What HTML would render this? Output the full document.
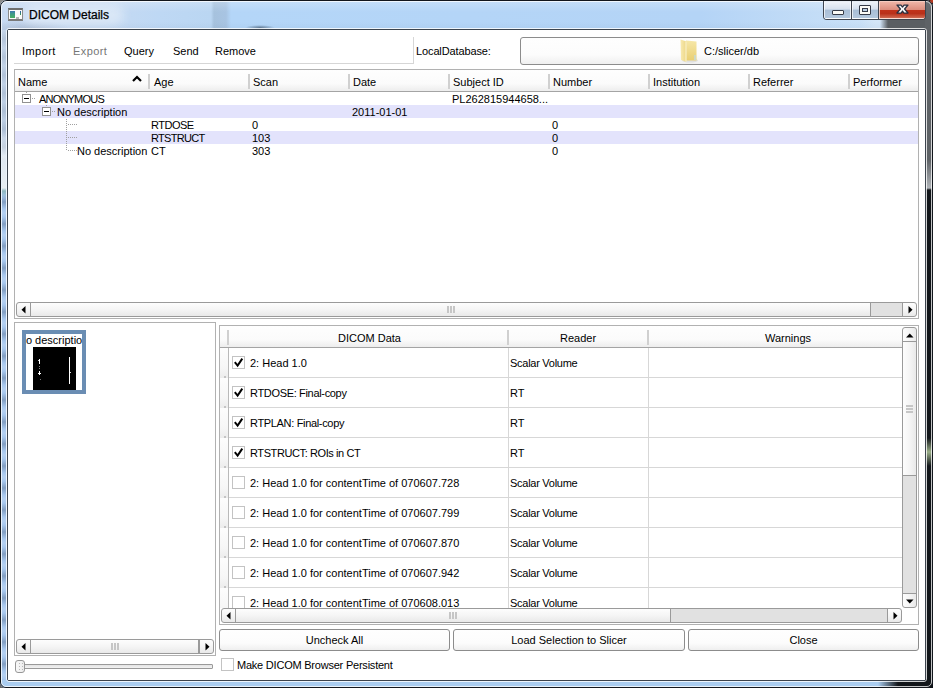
<!DOCTYPE html>
<html><head><meta charset="utf-8">
<style>
*{box-sizing:border-box}
html,body{margin:0;padding:0}
body{width:933px;height:688px;overflow:hidden;position:relative;background:#0d1116;font-family:"Liberation Sans",sans-serif;font-size:11px;color:#000}
.a{position:absolute}
.t{position:absolute;white-space:nowrap;line-height:13px;font-size:11px}
.sb{position:absolute;border:1px solid #979797;border-radius:3px;background:linear-gradient(180deg,#fdfdfd,#f4f4f4 50%,#e9e9e9)}
.sbv{position:absolute;border:1px solid #979797;border-radius:3px;background:linear-gradient(90deg,#fdfdfd,#f4f4f4 50%,#e9e9e9)}
.btn{position:absolute;border:1px solid #8c8c8c;border-radius:3px;background:linear-gradient(180deg,#fefefe 0,#fcfcfc 65%,#efefef 100%);text-align:center;line-height:13px;padding-top:4px}
.cb{position:absolute;width:13px;height:13px;border:1px solid #c3c3c3;background:#fff}
</style></head><body>

<div class="a" style="left:0px;top:0px;width:6px;height:6px;background:#8c8c8c"></div>
<div class="a" style="left:0px;top:682px;width:6px;height:6px;background:#6a6a6a"></div>
<div class="a" style="left:0;top:0;width:933px;height:688px;border-radius:7px 7px 6px 6px;overflow:hidden;background:linear-gradient(90deg,#a9cbee 0,#a9cbee 880px,#101418 896px,#101418 100%)">
<div class="a" style="left:0px;top:0px;width:933px;height:30px;background:linear-gradient(90deg,#c8daf2 0,#c6daf2 100px,#bed8f4 160px,#bad6f2 211px,#a6c2de 214px,#a8c4e2 226px,#b4d6f8 231px,#b4d4f6 700px,#c9e0f7 860px,#d4e6f8 875px)"></div>
<div class="a" style="left:245px;top:25px;width:30px;height:5px;border-radius:50%;background:radial-gradient(ellipse at center,rgba(40,60,80,.55) 0,rgba(40,60,80,0) 70%)"></div>
<div class="a" style="left:0px;top:20px;width:70px;height:10px;background:radial-gradient(ellipse at 40% 80%,rgba(120,130,150,.25) 0,rgba(120,130,150,0) 70%)"></div>
<div class="a" style="left:0px;top:0px;width:933px;height:30px;background:linear-gradient(180deg,rgba(255,255,255,.25) 0,rgba(255,255,255,0) 12px,rgba(0,0,0,0) 22px,rgba(60,90,130,.06) 30px)"></div>
<div class="a" style="left:24px;top:5px;width:100px;height:20px;border-radius:10px;background:rgba(240,246,252,.5);filter:blur(5px)"></div>
<div class="a" style="left:2px;top:30px;width:4px;height:650px;background:linear-gradient(180deg,#c6d6ea 0,#bccde2 100px,#dfe8f1 130px,#e8eef2 158px,#8fb8c0 161px,#a8c8ee 168px,#a8c8ee 100%)"></div>
<div class="a" style="left:2px;top:195px;width:4px;height:485px;background:repeating-linear-gradient(180deg,rgba(60,80,110,0) 0,rgba(60,80,110,.35) 7px,rgba(60,80,110,0) 14px,rgba(255,255,255,0.15) 18px,rgba(60,80,110,0) 22px)"></div>
<div class="a" style="left:2px;top:30px;width:4px;height:130px;background:repeating-linear-gradient(180deg,rgba(60,80,110,0) 0,rgba(60,80,110,.12) 9px,rgba(60,80,110,0) 18px),linear-gradient(180deg,rgba(255,255,255,0) 100px,rgba(255,255,255,.3) 130px)"></div>
<div class="a" style="left:880px;top:19px;width:53px;height:11px;background:linear-gradient(90deg,rgba(90,94,98,0) 0,#5a5e62 8px)"></div>
<div class="a" style="left:925px;top:0px;width:8px;height:688px;background:linear-gradient(180deg,#6a6e72 0,#5e6266 20px,#5e6266 160px,#b0b4b8 188px,#12161a 190px,#12161a 438px,#9aae88 452px,#12161a 466px)"></div>
<div class="a" style="left:0px;top:680px;width:933px;height:8px;background:linear-gradient(90deg,#aacdf0 0,#aacdf0 878px,#12161a 898px)"></div>
</div>
<div class="a" style="left:0px;top:0px;width:933px;height:688px;border:1px solid #12161c;border-radius:7px 7px 6px 6px"></div>
<div class="a" style="left:1px;top:1px;width:931px;height:686px;border:1px solid rgba(255,255,255,0.75);border-radius:6px 6px 5px 5px"></div>
<div class="a" style="left:6px;top:28px;width:921px;height:654px;border:1px solid rgba(255,255,255,0.8);border-radius:3px"></div>
<div class="a" style="left:7px;top:29px;width:919px;height:652px;border:1px solid #3c444e;border-radius:2px"></div>
<div class="a" style="left:8px;top:30px;width:917px;height:650px;background:#fff"></div>
<div class="a" style="left:8px;top:8px;width:15px;height:13px;background:#fbfbfb;border:1px solid #8c8c8c;border-top:2px solid #6e6e6e;border-bottom:2px solid #7a7a7a"><div class="a" style="left:1px;top:1px;width:5px;height:7px;background:linear-gradient(180deg,#3f78b0,#3f9a88 40%,#48b060)"></div><div class="a" style="left:11px;top:1px;width:1px;height:4px;background:linear-gradient(180deg,#2a5ab0,#40a050)"></div><div class="a" style="left:7px;top:7px;width:3px;height:2px;background:#b4b4b4"></div></div>
<div class="t" style="left:29px;top:8px;font-size:12px;line-height:14px;-webkit-text-stroke:0.25px #000">DICOM Details</div>
<div class="a" style="left:929px;top:0px;width:4px;height:3px;background:radial-gradient(circle at 100% 0,#c03a20 0,#c03a20 2px,rgba(192,58,32,0) 4px)"></div>
<div class="a" style="left:823px;top:1px;width:103px;height:19px;border:1px solid #3f4550;border-top:none;border-radius:0 0 4px 4px;overflow:hidden"><div class="a" style="left:0px;top:0px;width:27px;height:18px;border:1px solid rgba(255,255,255,.7);background:linear-gradient(180deg,#eef3f9 0,#d6e1ee 45%,#a9bed6 50%,#b4c8de 100%)"></div><div class="a" style="left:27px;top:0px;width:1px;height:18px;background:#3f4550"></div><div class="a" style="left:28px;top:0px;width:27px;height:18px;border:1px solid rgba(255,255,255,.7);background:linear-gradient(180deg,#eef3f9 0,#d6e1ee 45%,#a9bed6 50%,#b4c8de 100%)"></div><div class="a" style="left:54px;top:0px;width:1px;height:18px;background:#3f4550"></div><div class="a" style="left:55px;top:0px;width:47px;height:18px;border:1px solid rgba(255,230,220,.8);background:linear-gradient(180deg,#eeb4a6 0,#dc8e7e 47%,#c1321a 50%,#b9301a 72%,#cd6850 100%)"></div></div><div class="a" style="left:832px;top:10px;width:12px;height:5px;border:1px solid #363b48;border-radius:1px;background:#fbfaf6"></div><div class="a" style="left:859px;top:5px;width:12px;height:10px;border:1px solid #363b48;border-radius:1px;background:#fbfaf6"></div><div class="a" style="left:862px;top:8px;width:6px;height:4px;border:1px solid #363b48;background:#b9cde3"></div><svg class="a" style="left:896px;top:4px" width="13" height="10"><polygon points="1,1 5,1 6.5,3 8,1 12,1 8.6,5 12,9 8,9 6.5,7 5,9 1,9 4.4,5" fill="#f8f8f8" stroke="#2a3040" stroke-width="1.25" stroke-linejoin="round"/></svg>
<div class="t" style="left:22px;top:45px;letter-spacing:0.45px">Import</div>
<div class="t" style="left:73px;top:45px;color:#767676;letter-spacing:0.4px">Export</div>
<div class="t" style="left:124px;top:45px;">Query</div>
<div class="t" style="left:173px;top:45px;">Send</div>
<div class="t" style="left:215px;top:45px;">Remove</div>
<div class="a" style="left:14px;top:63px;width:400px;height:1px;background:#d6d6d6"></div>
<div class="a" style="left:413px;top:37px;width:1px;height:27px;background:#d6d6d6"></div>
<div class="t" style="left:416px;top:45px;letter-spacing:-0.12px">LocalDatabase:</div>
<div class="btn" style="left:520px;top:37px;width:399px;height:28px"></div>
<svg class="a" style="left:678px;top:38px" width="22" height="26">
<defs><linearGradient id="fg1" x1="0" y1="0" x2="0" y2="1"><stop offset="0" stop-color="#f6e7a8"/><stop offset="1" stop-color="#e9cf72"/></linearGradient>
<linearGradient id="fg2" x1="0" y1="0" x2="1" y2="0"><stop offset="0" stop-color="#f8eab0"/><stop offset="1" stop-color="#ecd685"/></linearGradient></defs>
<ellipse cx="12" cy="22.5" rx="8" ry="2" fill="#000" opacity=".08"/>
<path d="M8 2.5 L18.5 3.5 L18.5 22.5 L8 22.5 Z" fill="url(#fg1)"/>
<path d="M2.5 1.5 L8.5 3.5 L8.5 24 L3 22 Z" fill="url(#fg2)"/>
<path d="M7.5 3.5 L8.5 3.5 L8.5 24 L7.5 23.5 Z" fill="#fffbe6" opacity=".8"/>
<rect x="16" y="17" width="2" height="5" fill="#cfd9c0"/>
</svg>
<div class="t" style="left:704px;top:45px;">C:/slicer/db</div>
<div class="a" style="left:14px;top:69px;width:905px;height:250px;border:1px solid #b1b1b1;background:#fff"></div>
<div class="a" style="left:15px;top:70px;width:903px;height:21px;background:linear-gradient(180deg,#fefefe,#fbfbfb 65%,#ededed)"></div>
<div class="a" style="left:15px;top:91px;width:903px;height:1px;background:#a4a4a4"></div>
<div class="a" style="left:148px;top:74px;width:2px;height:15px;background:#d0d0d0"></div>
<div class="a" style="left:248px;top:74px;width:2px;height:15px;background:#d0d0d0"></div>
<div class="a" style="left:348px;top:74px;width:2px;height:15px;background:#d0d0d0"></div>
<div class="a" style="left:448px;top:74px;width:2px;height:15px;background:#d0d0d0"></div>
<div class="a" style="left:548px;top:74px;width:2px;height:15px;background:#d0d0d0"></div>
<div class="a" style="left:648px;top:74px;width:2px;height:15px;background:#d0d0d0"></div>
<div class="a" style="left:748px;top:74px;width:2px;height:15px;background:#d0d0d0"></div>
<div class="a" style="left:848px;top:74px;width:2px;height:15px;background:#d0d0d0"></div>
<div class="t" style="left:18px;top:76px;">Name</div>
<div class="t" style="left:154px;top:76px;">Age</div>
<div class="t" style="left:253px;top:76px;">Scan</div>
<div class="t" style="left:353px;top:76px;">Date</div>
<div class="t" style="left:453px;top:76px;">Subject ID</div>
<div class="t" style="left:553px;top:76px;">Number</div>
<div class="t" style="left:653px;top:76px;">Institution</div>
<div class="t" style="left:753px;top:76px;">Referrer</div>
<div class="t" style="left:853px;top:76px;">Performer</div>
<svg class="a" style="left:131px;top:74px" width="12" height="9"><polyline points="2,7 6,3 10,7" fill="none" stroke="#000" stroke-width="2.2"/></svg>
<div class="a" style="left:15px;top:105px;width:903px;height:13px;background:#e3e3fc"></div>
<div class="a" style="left:15px;top:131px;width:903px;height:13px;background:#e3e3fc"></div>
<div class="a" style="left:22px;top:94px;width:9px;height:9px;border:1px solid #919191;background:#fff"></div>
<div class="a" style="left:24px;top:98px;width:5px;height:1px;background:#000"></div>
<div class="a" style="left:42px;top:107px;width:9px;height:9px;border:1px solid #919191;background:#fff"></div>
<div class="a" style="left:44px;top:111px;width:5px;height:1px;background:#000"></div>
<div class="a" style="left:32px;top:98px;width:4px;height:1px;background:repeating-linear-gradient(90deg,#a0a0a0 0 1px,transparent 1px 2px)"></div><div class="a" style="left:52px;top:111px;width:4px;height:1px;background:repeating-linear-gradient(90deg,#a0a0a0 0 1px,transparent 1px 2px)"></div><div class="a" style="left:26px;top:92px;width:1px;height:1px;background:#a0a0a0"></div><div class="a" style="left:46px;top:105px;width:1px;height:1px;background:#a0a0a0"></div><div class="a" style="left:66px;top:119px;width:1px;height:32px;background:repeating-linear-gradient(180deg,#a0a0a0 0 1px,transparent 1px 2px)"></div><div class="a" style="left:68px;top:124px;width:9px;height:1px;background:repeating-linear-gradient(90deg,#a0a0a0 0 1px,transparent 1px 2px)"></div><div class="a" style="left:68px;top:137px;width:9px;height:1px;background:repeating-linear-gradient(90deg,#a0a0a0 0 1px,transparent 1px 2px)"></div><div class="a" style="left:68px;top:150px;width:9px;height:1px;background:repeating-linear-gradient(90deg,#a0a0a0 0 1px,transparent 1px 2px)"></div>
<div class="t" style="left:39px;top:93px;letter-spacing:-0.8px">ANONYMOUS</div>
<div class="t" style="left:57px;top:106px;">No description</div>
<div class="t" style="left:77px;top:145px;">No description</div>
<div class="t" style="left:352px;top:106px;">2011-01-01</div>
<div class="t" style="left:452px;top:93px;">PL262815944658...</div>
<div class="t" style="left:151px;top:119px;letter-spacing:-0.5px">RTDOSE</div>
<div class="t" style="left:252px;top:119px;">0</div>
<div class="t" style="left:552px;top:119px;">0</div>
<div class="t" style="left:151px;top:132px;letter-spacing:-0.7px">RTSTRUCT</div>
<div class="t" style="left:252px;top:132px;">103</div>
<div class="t" style="left:552px;top:132px;">0</div>
<div class="t" style="left:151px;top:145px;">CT</div>
<div class="t" style="left:252px;top:145px;">303</div>
<div class="t" style="left:552px;top:145px;">0</div>
<div class="a" style="left:16px;top:302px;width:901px;height:15px;border:1px solid #9a9a9a;border-radius:3px;background:linear-gradient(180deg,#fdfdfd 0,#f5f5f5 50%,#e9e9e9 100%)"></div><div class="a" style="left:871px;top:303px;width:31px;height:13px;background:#e1e1e1"></div><div class="a" style="left:30px;top:302px;width:1px;height:15px;background:#9a9a9a"></div><div class="a" style="left:870px;top:302px;width:1px;height:15px;background:#9a9a9a"></div><svg class="a" style="left:21px;top:306px" width="5" height="8"><path d="M4.5 0 L4.5 7.5 L0.5 3.75 Z" fill="#000"/></svg><svg class="a" style="left:908px;top:306px" width="5" height="8"><path d="M0.5 0 L0.5 7.5 L4.5 3.75 Z" fill="#000"/></svg><div class="a" style="left:447px;top:306px;width:2px;height:7px;background:#c6c6c6"></div><div class="a" style="left:450px;top:306px;width:2px;height:7px;background:#c6c6c6"></div><div class="a" style="left:453px;top:306px;width:2px;height:7px;background:#c6c6c6"></div><div class="a" style="left:902px;top:302px;width:1px;height:15px;background:#9a9a9a"></div>
<div class="a" style="left:14px;top:322px;width:202px;height:334px;border:1px solid #b1b1b1;background:#fff"></div>
<div class="a" style="left:22px;top:330px;width:64px;height:64px;border:4px solid #6a8db3;background:#fff;overflow:hidden"></div><div class="a" style="left:26px;top:334px;width:56px;height:13px;overflow:hidden"><div class="t" style="left:-8px;top:0px">No description</div></div><div class="a" style="left:33px;top:347px;width:43px;height:43px;background:#000"></div><div class="a" style="left:69px;top:357px;width:1px;height:27px;background:#fff"></div><div class="a" style="left:70px;top:372px;width:1px;height:1px;background:#ddd"></div><div class="a" style="left:39px;top:359px;width:1px;height:5px;background:#fff"></div><div class="a" style="left:38px;top:360px;width:1px;height:1px;background:#ccc"></div><div class="a" style="left:39px;top:366px;width:1px;height:1px;background:#888"></div><div class="a" style="left:39px;top:368px;width:1px;height:1px;background:#888"></div><div class="a" style="left:38px;top:373px;width:3px;height:1px;background:#fff"></div><div class="a" style="left:39px;top:371px;width:1px;height:4px;background:#fff"></div><div class="a" style="left:40px;top:379px;width:1px;height:1px;background:#777"></div>
<div class="a" style="left:16px;top:639px;width:198px;height:15px;border:1px solid #9a9a9a;border-radius:3px;background:linear-gradient(180deg,#fdfdfd 0,#f5f5f5 50%,#e9e9e9 100%)"></div><div class="a" style="left:30px;top:639px;width:1px;height:15px;background:#9a9a9a"></div><div class="a" style="left:198px;top:639px;width:1px;height:15px;background:#9a9a9a"></div><svg class="a" style="left:21px;top:643px" width="5" height="8"><path d="M4.5 0 L4.5 7.5 L0.5 3.75 Z" fill="#000"/></svg><svg class="a" style="left:205px;top:643px" width="5" height="8"><path d="M0.5 0 L0.5 7.5 L4.5 3.75 Z" fill="#000"/></svg><div class="a" style="left:111px;top:643px;width:2px;height:7px;background:#c6c6c6"></div><div class="a" style="left:114px;top:643px;width:2px;height:7px;background:#c6c6c6"></div><div class="a" style="left:117px;top:643px;width:2px;height:7px;background:#c6c6c6"></div><div class="a" style="left:199px;top:639px;width:1px;height:15px;background:#9a9a9a"></div>
<div class="a" style="left:20px;top:664px;width:193px;height:5px;border:1px solid #9a9a9a;border-radius:1px;background:linear-gradient(180deg,#e4e4e4,#f2f2f2)"></div>
<div class="a" style="left:15px;top:660px;width:10px;height:13px;border:1px solid #979797;border-radius:3px;background:linear-gradient(90deg,#f8f8f8,#ececec)"></div>
<div class="a" style="left:19px;top:663px;width:1px;height:1px;background:#b8b8b8"></div>
<div class="a" style="left:19px;top:666px;width:1px;height:1px;background:#b8b8b8"></div>
<div class="a" style="left:19px;top:669px;width:1px;height:1px;background:#b8b8b8"></div>
<div class="a" style="left:22px;top:663px;width:1px;height:1px;background:#b8b8b8"></div>
<div class="a" style="left:22px;top:666px;width:1px;height:1px;background:#b8b8b8"></div>
<div class="a" style="left:22px;top:669px;width:1px;height:1px;background:#b8b8b8"></div>
<div class="a" style="left:219px;top:325px;width:700px;height:300px;border:1px solid #b1b1b1;background:#fff"></div>
<div class="a" style="left:220px;top:326px;width:682px;height:21px;background:linear-gradient(180deg,#fefefe,#fbfbfb 65%,#ededed)"></div>
<div class="a" style="left:220px;top:347px;width:682px;height:1px;background:#a4a4a4"></div>
<div class="a" style="left:227px;top:330px;width:2px;height:15px;background:#d0d0d0"></div>
<div class="a" style="left:507px;top:330px;width:2px;height:15px;background:#d0d0d0"></div>
<div class="a" style="left:647px;top:330px;width:2px;height:15px;background:#d0d0d0"></div>
<div class="t" style="left:338px;top:332px">DICOM Data</div><div class="t" style="left:560px;top:332px">Reader</div><div class="t" style="left:765px;top:332px">Warnings</div><div class="a" style="left:220px;top:348px;width:8px;height:260px;background:repeating-linear-gradient(180deg,#fdfdfd 0,#f6f6f6 20px,#ececec 30px)"></div><div class="a" style="left:228px;top:348px;width:1px;height:260px;background:#b9b9b9"></div><div class="a" style="left:229px;top:348px;width:673px;height:260px;overflow:hidden"><div class="a" style="left:0px;top:29px;width:673px;height:1px;background:#d7d7d7"></div><div class="cb" style="left:3px;top:8px"></div><svg class="a" style="left:3px;top:8px" width="13" height="13"><path d="M2.8 6.2 L5.6 9.6 L10.3 2.6" fill="none" stroke="#000" stroke-width="2"/></svg><div class="t" style="left:21px;top:9px;letter-spacing:0px">2: Head 1.0</div><div class="t" style="left:281px;top:9px;letter-spacing:-0.27px">Scalar Volume</div><div class="a" style="left:0px;top:59px;width:673px;height:1px;background:#d7d7d7"></div><div class="cb" style="left:3px;top:38px"></div><svg class="a" style="left:3px;top:38px" width="13" height="13"><path d="M2.8 6.2 L5.6 9.6 L10.3 2.6" fill="none" stroke="#000" stroke-width="2"/></svg><div class="t" style="left:21px;top:39px;letter-spacing:-0.33px">RTDOSE: Final-copy</div><div class="t" style="left:281px;top:39px;letter-spacing:0px">RT</div><div class="a" style="left:0px;top:89px;width:673px;height:1px;background:#d7d7d7"></div><div class="cb" style="left:3px;top:68px"></div><svg class="a" style="left:3px;top:68px" width="13" height="13"><path d="M2.8 6.2 L5.6 9.6 L10.3 2.6" fill="none" stroke="#000" stroke-width="2"/></svg><div class="t" style="left:21px;top:69px;letter-spacing:-0.33px">RTPLAN: Final-copy</div><div class="t" style="left:281px;top:69px;letter-spacing:0px">RT</div><div class="a" style="left:0px;top:119px;width:673px;height:1px;background:#d7d7d7"></div><div class="cb" style="left:3px;top:98px"></div><svg class="a" style="left:3px;top:98px" width="13" height="13"><path d="M2.8 6.2 L5.6 9.6 L10.3 2.6" fill="none" stroke="#000" stroke-width="2"/></svg><div class="t" style="left:21px;top:99px;letter-spacing:-0.4px">RTSTRUCT: ROIs in CT</div><div class="t" style="left:281px;top:99px;letter-spacing:0px">RT</div><div class="a" style="left:0px;top:149px;width:673px;height:1px;background:#d7d7d7"></div><div class="cb" style="left:3px;top:128px"></div><div class="t" style="left:21px;top:129px;letter-spacing:0px">2: Head 1.0 for contentTime of 070607.728</div><div class="t" style="left:281px;top:129px;letter-spacing:-0.27px">Scalar Volume</div><div class="a" style="left:0px;top:179px;width:673px;height:1px;background:#d7d7d7"></div><div class="cb" style="left:3px;top:158px"></div><div class="t" style="left:21px;top:159px;letter-spacing:0px">2: Head 1.0 for contentTime of 070607.799</div><div class="t" style="left:281px;top:159px;letter-spacing:-0.27px">Scalar Volume</div><div class="a" style="left:0px;top:209px;width:673px;height:1px;background:#d7d7d7"></div><div class="cb" style="left:3px;top:188px"></div><div class="t" style="left:21px;top:189px;letter-spacing:0px">2: Head 1.0 for contentTime of 070607.870</div><div class="t" style="left:281px;top:189px;letter-spacing:-0.27px">Scalar Volume</div><div class="a" style="left:0px;top:239px;width:673px;height:1px;background:#d7d7d7"></div><div class="cb" style="left:3px;top:218px"></div><div class="t" style="left:21px;top:219px;letter-spacing:0px">2: Head 1.0 for contentTime of 070607.942</div><div class="t" style="left:281px;top:219px;letter-spacing:-0.27px">Scalar Volume</div><div class="a" style="left:0px;top:269px;width:673px;height:1px;background:#d7d7d7"></div><div class="cb" style="left:3px;top:248px"></div><div class="t" style="left:21px;top:249px;letter-spacing:0px">2: Head 1.0 for contentTime of 070608.013</div><div class="t" style="left:281px;top:249px;letter-spacing:-0.27px">Scalar Volume</div><div class="a" style="left:279px;top:0px;width:1px;height:260px;background:#d7d7d7"></div><div class="a" style="left:419px;top:0px;width:1px;height:260px;background:#d7d7d7"></div></div><div class="a" style="left:224px;top:376px;width:2px;height:2px;background:#c4c4c4"></div><div class="a" style="left:224px;top:406px;width:2px;height:2px;background:#c4c4c4"></div><div class="a" style="left:224px;top:436px;width:2px;height:2px;background:#c4c4c4"></div><div class="a" style="left:224px;top:466px;width:2px;height:2px;background:#c4c4c4"></div><div class="a" style="left:224px;top:496px;width:2px;height:2px;background:#c4c4c4"></div><div class="a" style="left:224px;top:526px;width:2px;height:2px;background:#c4c4c4"></div><div class="a" style="left:224px;top:556px;width:2px;height:2px;background:#c4c4c4"></div><div class="a" style="left:224px;top:586px;width:2px;height:2px;background:#c4c4c4"></div><div class="a" style="left:224px;top:616px;width:2px;height:2px;background:#c4c4c4"></div><div class="a" style="left:902px;top:327px;width:15px;height:281px;border:1px solid #9a9a9a;border-radius:3px;background:linear-gradient(90deg,#fdfdfd 0,#f5f5f5 50%,#e9e9e9 100%)"></div><div class="a" style="left:903px;top:476px;width:13px;height:117px;background:#e1e1e1"></div><div class="a" style="left:902px;top:341px;width:15px;height:1px;background:#9a9a9a"></div><div class="a" style="left:902px;top:475px;width:15px;height:1px;background:#9a9a9a"></div><div class="a" style="left:902px;top:593px;width:15px;height:1px;background:#9a9a9a"></div><svg class="a" style="left:906px;top:333px" width="8" height="5"><path d="M0 4.5 L7.5 4.5 L3.75 0.5 Z" fill="#000"/></svg><svg class="a" style="left:906px;top:599px" width="8" height="5"><path d="M0 0.5 L7.5 0.5 L3.75 4.5 Z" fill="#000"/></svg><div class="a" style="left:906px;top:405px;width:7px;height:2px;background:#c6c6c6"></div><div class="a" style="left:906px;top:408px;width:7px;height:2px;background:#c6c6c6"></div><div class="a" style="left:906px;top:411px;width:7px;height:2px;background:#c6c6c6"></div><div class="a" style="left:221px;top:608px;width:681px;height:15px;border:1px solid #9a9a9a;border-radius:3px;background:linear-gradient(180deg,#fdfdfd 0,#f5f5f5 50%,#e9e9e9 100%)"></div><div class="a" style="left:671px;top:609px;width:216px;height:13px;background:#e1e1e1"></div><div class="a" style="left:235px;top:608px;width:1px;height:15px;background:#9a9a9a"></div><div class="a" style="left:670px;top:608px;width:1px;height:15px;background:#9a9a9a"></div><svg class="a" style="left:226px;top:612px" width="5" height="8"><path d="M4.5 0 L4.5 7.5 L0.5 3.75 Z" fill="#000"/></svg><svg class="a" style="left:893px;top:612px" width="5" height="8"><path d="M0.5 0 L0.5 7.5 L4.5 3.75 Z" fill="#000"/></svg><div class="a" style="left:449px;top:612px;width:2px;height:7px;background:#c6c6c6"></div><div class="a" style="left:452px;top:612px;width:2px;height:7px;background:#c6c6c6"></div><div class="a" style="left:455px;top:612px;width:2px;height:7px;background:#c6c6c6"></div><div class="a" style="left:887px;top:608px;width:1px;height:15px;background:#9a9a9a"></div>
<div class="btn" style="left:219px;top:629px;width:231px;height:22px">Uncheck All</div>
<div class="btn" style="left:453px;top:629px;width:232px;height:22px">Load Selection to Slicer</div>
<div class="btn" style="left:688px;top:629px;width:231px;height:22px">Close</div>
<div class="cb" style="left:221px;top:658px"></div>
<div class="t" style="left:237px;top:659px;letter-spacing:-0.22px">Make DICOM Browser Persistent</div>
</body></html>
